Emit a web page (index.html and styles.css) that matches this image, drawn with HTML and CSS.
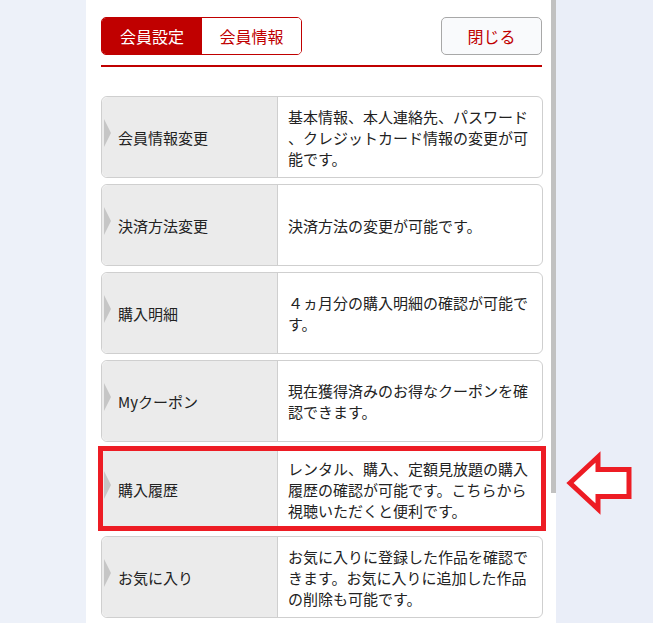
FILE: index.html
```html
<!DOCTYPE html>
<html lang="ja">
<head>
    <meta charset="UTF-8">
    <meta name="viewport" content="width=device-width, initial-scale=1.0">
    <title>会員設定</title>
    <link rel="stylesheet" href="styles.css">
</head>
<body>
    <div class="side"></div>
    <div class="panel">
        <div class="scroll-thumb"></div>
        <div class="header">
            <div class="tabs">
                <span class="tab active">会員設定</span>
                <span class="tab">会員情報</span>
            </div>
            <button class="close-btn">閉じる</button>
        </div>

        <div class="menu">
            <div class="menu-item">
                <div class="menu-name">会員情報変更</div>
                <div class="menu-desc">基本情報、本人連絡先、パスワード、クレジットカード情報の変更が可能です。</div>
            </div>
            <div class="menu-item">
                <div class="menu-name">決済方法変更</div>
                <div class="menu-desc">決済方法の変更が可能です。</div>
            </div>
            <div class="menu-item">
                <div class="menu-name">購入明細</div>
                <div class="menu-desc">４ヵ月分の購入明細の確認が可能です。</div>
            </div>
            <div class="menu-item">
                <div class="menu-name">Myクーポン</div>
                <div class="menu-desc">現在獲得済みのお得なクーポンを確認できます。</div>
            </div>
            <div class="menu-item marked">
                <div class="menu-name">購入履歴</div>
                <div class="menu-desc">レンタル、購入、定額見放題の購入履歴の確認が可能です。こちらから視聴いただくと便利です。</div>
                <div class="mark-box"></div>
                <svg class="mark-arrow" width="74" height="70" viewBox="0 0 74 70">
                    <polygon points="8,34 36,8 36,20.5 67,20.5 67,47.5 36,47.5 36,60" fill="#fff" stroke="#ed1c24" stroke-width="5" stroke-linejoin="miter"/>
                </svg>
            </div>
            <div class="menu-item">
                <div class="menu-name">お気に入り</div>
                <div class="menu-desc">お気に入りに登録した作品を確認できます。お気に入りに追加した作品の削除も可能です。</div>
            </div>
        </div>
    </div>
    <div class="side"></div>
</body>
</html>
```

FILE: styles.css
```css
*{
    margin: 0;
    padding: 0;
    box-sizing: border-box;
}
body{
    height: 100vh;
    overflow: hidden;
    display: flex;
    background: #ecf0f8;
    font-family: "Noto Sans CJK JP", "Noto Sans", sans-serif;
    color: #222;
}
.side{
    width: 86px;
    background: #edf1f9;
}
.side:last-child{
    flex: 1;
    background: #eaeef8;
}
.panel{
    position: relative;
    width: 470px;
    background: #fff;
    padding: 17px 13px 0 15px;
}
.scroll-thumb{
    position: absolute;
    top: 0;
    right: 0;
    width: 5px;
    height: 493px;
    background: #c1c1c1;
}
.header{
    display: flex;
    justify-content: space-between;
    align-items: center;
    margin-right: 1px;
    padding-bottom: 10px;
    border-bottom: 2px solid #c00000;
}
.tabs{
    display: flex;
    border: 1px solid #c00000;
    border-radius: 5px;
    overflow: hidden;
    height: 38px;
}
.tab{
    width: 99px;
    display: flex;
    justify-content: center;
    align-items: center;
    font-size: 16px;
    color: #c00000;
    background: #fff;
}
.tab.active{
    width: 100px;
    color: #fff;
    background: #c00000;
}
.close-btn{
    width: 101px;
    height: 38px;
    font-family: inherit;
    font-size: 16px;
    color: #c00000;
    background: #f9fafc;
    border: 1px solid #a8a8a8;
    border-radius: 5px;
}
.menu{
    display: flex;
    flex-direction: column;
    gap: 6px;
    padding-top: 29px;
}
.menu-item{
    position: relative;
    display: flex;
    height: 82px;
    border: 1px solid #cfcfcf;
    border-radius: 6px;
    background: #fff;
}
.menu-name{
    position: relative;
    width: 176px;
    display: flex;
    align-items: center;
    padding-left: 16px;
    font-size: 15px;
    background: #ebebeb;
    border-right: 1px solid #cfcfcf;
    border-radius: 6px 0 0 6px;
}
.menu-name::before{
    content: "";
    position: absolute;
    left: 2px;
    top: 50%;
    margin-top: -18px;
    border-top: 14px solid transparent;
    border-bottom: 14px solid transparent;
    border-left: 7px solid #c6c6c6;
}
.menu-desc{
    flex: 1;
    display: flex;
    align-items: center;
    padding: 0 10px;
    font-size: 15px;
    line-height: 21px;
    line-break: anywhere;
}
.mark-box{
    position: absolute;
    top: -3px;
    left: -4px;
    right: -4px;
    bottom: -2px;
    border: 5px solid #ed1c24;
}
.mark-arrow{
    position: absolute;
    left: 460px;
    top: 0;
}
```
